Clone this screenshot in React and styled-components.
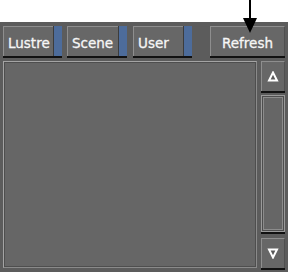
import styled, { createGlobalStyle } from "styled-components";

const GlobalStyle = createGlobalStyle`
  html, body {
    margin: 0;
    padding: 0;
    background: #ffffff;
  }
`;

const Page = styled.div`
  position: relative;
  width: 288px;
  height: 272px;
  padding-top: 22px;
  box-sizing: border-box;
  font-family: "DejaVu Sans", "Liberation Sans", sans-serif;
`;

const Panel = styled.div`
  height: 250px;
  background: #5c5c5c;
  display: flex;
  flex-direction: column;
  padding: 4px 3px 0 3px;
  box-sizing: border-box;
`;

const Toolbar = styled.div`
  display: flex;
  align-items: flex-start;
  height: 33px;
`;

const ToolButton = styled.div`
  position: relative;
  width: ${(p) => p.$width}px;
  margin-left: ${(p) => p.$gap || 0}px;
  height: 30px;
  box-sizing: border-box;
  background: #676767;
  border-top: 1px solid #8e8e8e;
  border-left: 1px solid #8e8e8e;
  border-right: 1px solid #505050;
  box-shadow: 0 2px 0 #111;
  color: #f6f6f6;
  font-size: 13.5px;
  -webkit-text-stroke: 0.3px #f6f6f6;
  display: flex;
  align-items: center;
  justify-content: ${(p) => (p.$center ? "center" : "flex-start")};
  padding-left: ${(p) => (p.$center ? 0 : 4)}px;
  padding-right: ${(p) => (p.$strip ? 8 : 0)}px;
  padding-top: 2px;
`;

const Strip = styled.span`
  position: absolute;
  top: -1px;
  right: -1px;
  bottom: 0;
  width: 8px;
  background: #4d6c9b;
  border-left: 1px solid #3c3c3c;
`;

const Body = styled.div`
  display: flex;
  gap: 4px;
  margin-top: 2px;
  flex: 1;
  padding-bottom: 4px;
`;

const List = styled.div`
  flex: 1;
  background: #666666;
  border-top: 1px solid #a4a4a4;
  border-left: 1px solid #a4a4a4;
  border-right: 1px solid #8a8a8a;
  border-bottom: 1px solid #8a8a8a;
  box-shadow: inset 1px 1px 0 #4e4e4e, inset -1px -1px 0 #4e4e4e;
`;

const Scroll = styled.div`
  width: 24px;
  display: flex;
  flex-direction: column;
  gap: 4px;
`;

const ArrowButton = styled.div`
  height: 30px;
  box-sizing: border-box;
  background: #676767;
  border-top: 1px solid #8e8e8e;
  border-left: 1px solid #8e8e8e;
  border-right: 1px solid #505050;
  box-shadow: 0 2px 0 #111;
  display: flex;
  align-items: center;
  justify-content: center;
`;

const Track = styled.div`
  flex: 1;
  margin-bottom: 2px;
  background: #666666;
  border: 1px solid #9a9a9a;
  box-shadow: inset 1px 1px 0 #4e4e4e, inset -1px -1px 0 #4e4e4e,
    inset 2px 2px 0 #8c8c8c, inset -2px -2px 0 #8c8c8c, 0 2px 0 #111;
`;

const Pointer = styled.svg`
  position: absolute;
  left: 242px;
  top: 0;
`;

const Tri = ({ down }) => (
  <svg width="12" height="11" viewBox="0 0 12 11">
    <polygon
      points={down ? "2,1.5 10,1.5 6,9.5" : "6,1.5 10,9.5 2,9.5"}
      fill="#5a5a5a"
      stroke="#ffffff"
      strokeWidth="2"
      strokeLinejoin="miter"
    />
  </svg>
);

export default function App() {
  return (
    <Page>
      <GlobalStyle />
      <Panel>
        <Toolbar>
          <ToolButton $width={59} $strip>
            Lustre
            <Strip />
          </ToolButton>
          <ToolButton $width={60} $gap={5} $strip>
            Scene
            <Strip />
          </ToolButton>
          <ToolButton $width={59} $gap={6} $strip>
            User
            <Strip />
          </ToolButton>
          <ToolButton $width={75} $gap={18} $center>
            Refresh
          </ToolButton>
        </Toolbar>
        <Body>
          <List />
          <Scroll>
            <ArrowButton>
              <Tri />
            </ArrowButton>
            <Track />
            <ArrowButton>
              <Tri down />
            </ArrowButton>
          </Scroll>
        </Body>
      </Panel>
      <Pointer width="16" height="34" viewBox="0 0 16 34">
        <line x1="8" y1="0" x2="8" y2="20" stroke="#000" strokeWidth="2" />
        <polygon points="1,18 15,18 8,33" fill="#000" />
      </Pointer>
    </Page>
  );
}
